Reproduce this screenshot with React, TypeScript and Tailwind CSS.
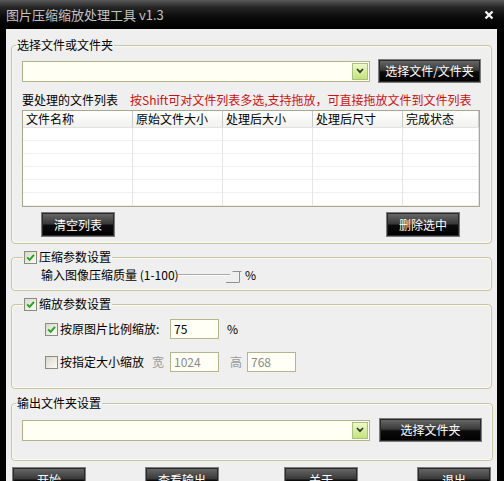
import React from "react"

const font = "font-['Noto_Sans_CJK_SC','Noto_Sans',sans-serif]"

function BlackButton({ label, className = "" }: { label: string; className?: string }) {
  return (
    <button
      type="button"
      className={`flex shrink-0 items-center justify-center border border-[#7b7b7b] bg-[linear-gradient(to_bottom,#6a6a6a_0%,#3a3a3a_46%,#0c0c0c_54%,#000_100%)] text-[12px] leading-none text-white shadow-[inset_0_0_0_1px_#2a2a2a] ${className}`}
    >
      {label}
    </button>
  )
}

function Check({ checked }: { checked: boolean }) {
  return (
    <span className="flex h-[13px] w-[13px] shrink-0 items-center justify-center border border-[#8c8c7c] bg-[linear-gradient(135deg,#d8d8cc,#fbfbf7)]">
      {checked && (
        <svg viewBox="0 0 9 9" className="h-[9px] w-[9px]">
          <path d="M1.2 4.4 L3.6 6.9 L8 1.8" stroke="#22a322" strokeWidth="1.9" fill="none" />
        </svg>
      )}
    </span>
  )
}

function Combo() {
  return (
    <div className="flex h-[21px] w-[348px] shrink-0 items-center justify-end border border-[#b3b38a] bg-[#fffff4] pr-[1px]">
      <div className="flex h-[17px] w-[16px] items-center justify-center border border-[#a9bf84] bg-[linear-gradient(to_bottom,#eef9c8,#c3e27a)]">
        <svg viewBox="0 0 8 6" className="h-[6px] w-[8px]">
          <path d="M1 1 L4 4.2 L7 1" stroke="#2f3a2a" strokeWidth="1.7" fill="none" />
        </svg>
      </div>
    </div>
  )
}

function Field({ value, disabled }: { value: string; disabled?: boolean }) {
  return (
    <div
      className={`flex h-[20px] w-[49px] shrink-0 items-center border border-[#b6b68c] bg-[#fffff6] pl-[3px] text-[12px] leading-none ${
        disabled ? "text-[#8a8a8a]" : "text-black"
      }`}
    >
      {value}
    </div>
  )
}

const columns = [
  { name: "文件名称", w: "w-[110px]" },
  { name: "原始文件大小", w: "w-[90px]" },
  { name: "处理后大小", w: "w-[90px]" },
  { name: "处理后尺寸", w: "w-[90px]" },
  { name: "完成状态", w: "flex-1" },
]

export default function App() {
  return (
    <div className={`flex h-[481px] w-[504px] flex-col overflow-hidden bg-black text-[12px] text-black ${font}`}>
      {/* title bar */}
      <div className="flex h-[29px] shrink-0 items-center justify-between bg-[linear-gradient(to_bottom,#5a5a5a_0%,#262626_25%,#0a0a0a_60%,#000_100%)] pl-[6px] pr-[10px]">
        <span className="text-[13px] leading-none text-[#c2c2c2]">图片压缩缩放处理工具 v1.3</span>
        <svg viewBox="0 0 10 10" className="h-[10px] w-[10px]">
          <path d="M1.5 1.5 L8.5 8.5 M8.5 1.5 L1.5 8.5" stroke="#f4f4f4" strokeWidth="2.4" />
        </svg>
      </div>

      <div className="ml-[6px] mr-[7px] flex-1 bg-[#efefef] pt-[8px]">
        {/* group 1 */}
        <fieldset className="mx-[5px] rounded-[4px] border border-[#c6c6a0] p-0 shadow-[inset_0_0_0_1px_#fbfbf3]">
          <legend className="ml-[4px] px-[1px] leading-[16px]">选择文件或文件夹</legend>
          <div className="px-[10px] pb-[6px]">
            <div className="mt-[6px] flex h-[24px] items-center">
              <Combo />
              <BlackButton label="选择文件/文件夹" className="ml-[8px] h-[24px] w-[103px]" />
            </div>
            <div className="mt-[9px] flex h-[16px] items-center leading-[16px]">
              <span>要处理的文件列表</span>
              <span className="ml-[12px] text-[#cc1010]">按Shift可对文件列表多选,支持拖放，可直接拖放文件到文件列表</span>
            </div>
            <div className="mt-[2px] h-[97px] w-[458px] overflow-hidden border border-[#a8a88c] bg-white">
              <div className="flex h-[17px] border-b border-[#e2e2e2] bg-[linear-gradient(to_bottom,#ffffff,#f1f1ee)]">
                {columns.map((c) => (
                  <div
                    key={c.name}
                    className={`${c.w} flex items-center border-r border-[#c9c9c9] pl-[3px] leading-none`}
                  >
                    {c.name}
                  </div>
                ))}
              </div>
              <div className="flex h-[79px]">
                {columns.map((c) => (
                  <div key={c.name} className={`${c.w} border-r border-[#e4e4e4]`}>
                    {[0, 1, 2, 3, 4, 5].map((r) => (
                      <div key={r} className="h-[13px] border-b border-[#efefef]" />
                    ))}
                  </div>
                ))}
              </div>
            </div>
            <div className="mt-[5px] flex h-[25px]">
              <BlackButton label="清空列表" className="ml-[19px] h-[25px] w-[74px]" />
              <BlackButton label="删除选中" className="ml-auto mr-[21px] h-[25px] w-[74px]" />
            </div>
          </div>
        </fieldset>

        {/* group 2 */}
        <fieldset className="mx-[5px] mt-[5px] rounded-[4px] border border-[#c6c6a0] p-0 shadow-[inset_0_0_0_1px_#fbfbf3]">
          <legend className="ml-[11px] flex items-center gap-[2px] px-[1px] leading-[16px]">
            <Check checked />
            <span>压缩参数设置</span>
          </legend>
          <div className="mt-[2px] flex h-[16px] items-center pl-[29px] leading-[16px]">
            <span className="w-[137px] shrink-0 whitespace-nowrap">输入图像压缩质量 (1-100)</span>
            <div className="relative flex h-[16px] w-[78px] items-center">
              <div className="h-[2px] w-[52px] border-t border-[#a8a8a8] border-b border-b-white" />
              <svg viewBox="0 0 18 12" className="absolute left-[48px] top-[4px] h-[12px] w-[18px]">
                <path d="M6.5 0.5 H15.5 M13.5 0.5 V11 M0 11.5 H13.5" stroke="#8f8f8f" strokeWidth="1" fill="none" />
              </svg>
              <span className="ml-auto">%</span>
            </div>
          </div>
          <div className="h-[7px]" />
        </fieldset>

        {/* group 3 */}
        <fieldset className="mx-[5px] mt-[5px] rounded-[4px] border border-[#c6c6a0] p-0 shadow-[inset_0_0_0_1px_#fbfbf3]">
          <legend className="ml-[11px] flex items-center gap-[2px] px-[1px] leading-[16px]">
            <Check checked />
            <span>缩放参数设置</span>
          </legend>
          <div className="pb-[16px] pl-[33px]">
            <div className="mt-[7px] flex h-[20px] items-center">
              <div className="flex w-[125px] items-center gap-[2px]">
                <Check checked />
                <span className="leading-none">按原图片比例缩放:</span>
              </div>
              <Field value="75" />
              <span className="ml-[8px] leading-none">%</span>
            </div>
            <div className="mt-[13px] flex h-[20px] items-center">
              <div className="flex w-[107px] items-center gap-[2px]">
                <Check checked={false} />
                <span className="leading-none">按指定大小缩放</span>
              </div>
              <span className="w-[18px] leading-none text-[#9a9a9a]">宽</span>
              <Field value="1024" disabled />
              <span className="ml-[11px] w-[17px] leading-none text-[#9a9a9a]">高</span>
              <Field value="768" disabled />
            </div>
          </div>
        </fieldset>

        {/* group 4 */}
        <fieldset className="mx-[5px] mt-[6px] rounded-[4px] border border-[#c6c6a0] p-0 shadow-[inset_0_0_0_1px_#fbfbf3]">
          <legend className="ml-[4px] px-[1px] leading-[16px]">输出文件夹设置</legend>
          <div className="px-[10px] pb-[18px]">
            <div className="mt-[7px] flex h-[24px] items-center">
              <Combo />
              <BlackButton label="选择文件夹" className="ml-[9px] h-[24px] w-[103px]" />
            </div>
          </div>
        </fieldset>

        {/* bottom buttons */}
        <div className="mt-[6px] flex pl-[6px]">
          <BlackButton label="开始" className="h-[25px] w-[74px]" />
          <BlackButton label="查看输出" className="ml-[59px] h-[25px] w-[74px]" />
          <BlackButton label="关于" className="ml-[65px] h-[25px] w-[74px]" />
          <BlackButton label="退出" className="ml-[59px] h-[25px] w-[74px]" />
        </div>
      </div>
    </div>
  )
}
